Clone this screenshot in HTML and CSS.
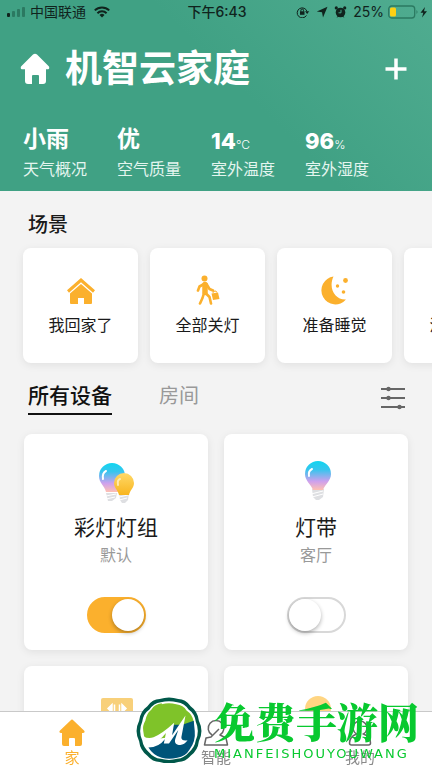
FILE: index.html
```html
<!DOCTYPE html>
<html lang="zh-CN">
<head>
<meta charset="utf-8">
<meta name="viewport" content="width=device-width, initial-scale=1">
<title>机智云家庭</title>
<link rel="stylesheet" href="styles.css">
</head>
<body>
<div class="app">
  <header class="hero">
    <div class="status">
      <div class="status-left">
        <svg width="20" height="12" viewBox="0 0 20 12" aria-hidden="true"><rect x="1" y="7" width="3" height="4" rx="1" fill="#10231d"/><g fill="#2b7961"><rect x="6" y="5" width="3" height="6" rx="1"/><rect x="11" y="3" width="3" height="8" rx="1"/><rect x="16" y="1" width="3" height="10" rx="1"/></g></svg>
        <span class="carrier">中国联通</span>
        <svg class="wifi" width="16" height="12" viewBox="0 0 16 12" aria-hidden="true"><g fill="none" stroke="#10231d" stroke-width="2"><path d="M.8 4.4a10.3 10.3 0 0 1 14.4 0"/><path d="M3.4 7.2a6.6 6.6 0 0 1 9.2 0"/></g><path d="M8 11.6 5.5 9a3.6 3.6 0 0 1 5 0z" fill="#10231d"/></svg>
      </div>
      <time class="clock">下午6:43</time>
      <div class="status-right">
        <svg width="14" height="12" viewBox="0 0 14 12" aria-hidden="true"><path d="M10.5 9.4A5 5 0 1 1 11 5.500" fill="none" stroke="#10231d"/><path d="M9 5.300h4.200L11.200 8z" fill="#10231d"/><rect x="4" y="5.300" width="4.500" height="3.500" fill="#10231d"/><path d="M4.900 5.500V4.300a1.300 1.300 0 0 1 2.600 0v1.200" fill="none" stroke="#10231d"/></svg>
        <svg width="12" height="12" viewBox="0 0 12 12" aria-hidden="true"><path d="M11.500.8 7 11.500 6 6.300.8 5.500z" fill="#10231d"/></svg>
        <svg width="13" height="12" viewBox="0 0 13 12" aria-hidden="true"><g fill="#10231d"><circle cx="6.500" cy="6.500" r="4.800"/><circle cx="2.300" cy="1.900" r="1.600"/><circle cx="10.700" cy="1.900" r="1.600"/><path d="m2.500 11.800 1.400-2h5.200l1.400 2-2-1h-4z"/></g><path d="M7 3.800v3H4.500" fill="none" stroke="#45a488"/></svg>
        <span class="percent">25%</span>
        <svg width="40" height="14" viewBox="0 0 40 14" aria-hidden="true"><rect x=".7" y="1" width="26" height="12" rx="3" fill="none" stroke="#2b7961" stroke-width="1.300"/><rect x="2" y="2.500" width="6" height="9" rx="1.500" fill="#fdd013"/><path d="M28.500 5v4q2-2 0-4z" fill="#2b7961"/><path d="m37 2-4.500 5.800h2.800L34 12.500l5-6.200h-3z" fill="#10231d"/></svg>
      </div>
    </div>
    <div class="title-row">
      <svg width="30" height="32" viewBox="0 0 30 32" aria-hidden="true"><path d="M13 1.600a3 3 0 0 1 4 0l11.500 11.500c1.500 1.500.6 3.200-1 3.200H26V28a3 3 0 0 1-3 3h-4v-8a1 1 0 0 0-1-1h-5a1 1 0 0 0-1 1v8H8a3 3 0 0 1-3-3V16.300H2.500c-1.600 0-2.500-1.700-1-3.200z" fill="#fff"/></svg>
      <h1>机智云家庭</h1>
      <button class="icon-button add" type="button" aria-label="添加"><svg width="24" height="24" viewBox="0 0 24 24"><path d="M12 1.500v21M1.500 12h21" stroke="#fff" stroke-width="3.500"/></svg></button>
    </div>
    <dl class="weather">
      <div><dd>小雨</dd><dt>天气概况</dt></div>
      <div><dd>优</dd><dt>空气质量</dt></div>
      <div><dd class="number">14<small>°C</small></dd><dt>室外温度</dt></div>
      <div><dd class="number">96<small>%</small></dd><dt>室外湿度</dt></div>
    </dl>
  </header>

  <main>
    <h2>场景</h2>
    <div class="scenes">
      <button class="scene" type="button">
        <svg width="30" height="30" viewBox="0 0 30 30" aria-hidden="true"><g fill="#fbb02d"><path d="M1 15.300 15 3l14 12.300-2 2.400L15 7.200 3 17.700z"/><path d="M4 18.400 15 9l11 9.400V28a1 1 0 0 1-1 1h-7v-6h-6v6H5a1 1 0 0 1-1-1z"/></g></svg>
        <span>我回家了</span>
      </button>
      <button class="scene" type="button">
        <svg width="30" height="30" viewBox="0 0 30 30" aria-hidden="true"><circle cx="11.500" cy="3.500" r="3" fill="#fbb02d"/><g fill="none" stroke="#fbb02d" stroke-linecap="round" stroke-linejoin="round"><path d="M12 9.500v8" stroke-width="5.500"/><path d="m11 9-4.500 2.500L5 15.500M13.500 9l3 5 3.500 1.500M11 18l-1.500 5L7 28.500M12.500 18l4 4 1.500 6.500" stroke-width="2.600"/></g><path d="m18.500 18.500 6.500-1 1.500 6.500-6.500 1z" fill="#fbb02d"/><path d="m20 18 .3-1.500 2.700-.5.800 1.500" fill="none" stroke="#fbb02d"/></svg>
        <span>全部关灯</span>
      </button>
      <button class="scene" type="button">
        <svg width="30" height="30" viewBox="0 0 30 30" aria-hidden="true"><g fill="#fbb02d"><path d="M13.500 1.500a14 14 0 1 0 12.500 23C15 25 8 13 13.500 1.500z"/><circle cx="25.500" cy="5.500" r="2.400"/><circle cx="17.500" cy="11" r="1.700"/><circle cx="23.500" cy="17" r="1.800"/></g></svg>
        <span>准备睡觉</span>
      </button>
      <button class="scene" type="button">
        <svg width="30" height="30" viewBox="0 0 30 30" aria-hidden="true"><path d="M15 2c5 7 9 11 9 17a9 9 0 0 1-18 0c0-6 4-10 9-17z" fill="#fbb02d"/></svg>
        <span>浪漫时光</span>
      </button>
    </div>

    <div class="filters">
      <button class="filter active" type="button">所有设备</button>
      <button class="filter" type="button">房间</button>
      <button class="icon-button settings" type="button" aria-label="设备管理"><svg width="24" height="24" viewBox="0 0 24 24"><path d="M0 3h24M0 12h24M0 21h24" stroke="#666" stroke-width="2"/><g fill="#666"><circle cx="7.500" cy="3" r="2.200"/><circle cx="7.500" cy="12" r="2.200"/><circle cx="18.500" cy="21" r="2.200"/></g></svg></button>
    </div>

    <div class="devices">
      <article class="device">
        <svg width="48" height="48" viewBox="0 0 48 48" aria-hidden="true">
          <defs>
            <linearGradient id="cool" x1="0" y1="0" x2="0" y2="1"><stop offset="0" stop-color="#10d5ef"/><stop offset=".3" stop-color="#37c5ee"/><stop offset=".7" stop-color="#cda0ee"/><stop offset="1" stop-color="#ffc0b2"/></linearGradient>
            <linearGradient id="warm" x1="0" y1="0" x2="0" y2="1"><stop offset="0" stop-color="#ffd968"/><stop offset="1" stop-color="#f8b51f"/></linearGradient>
          </defs>
          <path d="M14 34h11l-1 5-4 3h-4z" fill="#dedfe2"/><path d="m14 37 10-2m-10 5 9-2" stroke="#fff"/>
          <path d="M20 4a13 13 0 0 0-13 13c0 7 5 9 7 16h12c2-7 7-9 7-16A13 13 0 0 0 20 4z" fill="url(#cool)"/>
          <path d="M11 20q-1-6 3-8" fill="none" stroke="#fff" stroke-width="2" stroke-linecap="round"/>
          <path d="M27 34h10l-1 7-3 3h-3l-2-3z" fill="#dedfe2"/><path d="m27 38 9-2m-9 5 8-2" stroke="#fff"/>
          <path d="M32 14a10 10 0 0 0-10 10c0 5 4 7 5 12h10c1-5 5-7 5-12a10 10 0 0 0-10-10z" fill="url(#warm)"/>
          <path d="M26 26q-1-5 2-6" fill="none" stroke="#ffebb0" stroke-width="2" stroke-linecap="round"/>
        </svg>
        <h3>彩灯灯组</h3>
        <p>默认</p>
        <input class="switch" type="checkbox" role="switch" aria-label="彩灯灯组" checked>
      </article>
      <article class="device">
        <svg width="48" height="48" viewBox="0 0 48 48" aria-hidden="true">
          <path d="M20 30h12l-1 8-4 3h-3l-3-3z" fill="#dedfe2"/><path d="m19 35 12-3m-11 6 11-3" stroke="#fff"/>
          <path d="M26 2a13 13 0 0 0-13 13c0 7 6 10 8 16h10c2-6 8-9 8-16A13 13 0 0 0 26 2z" fill="url(#cool)"/>
          <path d="M17 17q-1-5 3-7" fill="none" stroke="#fff" stroke-width="2" stroke-linecap="round"/>
        </svg>
        <h3>灯带</h3>
        <p>客厅</p>
        <input class="switch" type="checkbox" role="switch" aria-label="灯带">
      </article>
      <article class="device">
        <svg width="48" height="48" viewBox="0 0 48 48" aria-hidden="true"><rect x="9" y="7" width="32" height="32" rx="2" fill="#f8d07a"/><path d="m20 13.500-4 4 4 4zM30 13.500l4 4-4 4zM22.500 13.500v8M27.500 13.500v8" fill="#fff" stroke="#fff" stroke-width="1.500"/></svg>
      </article>
      <article class="device">
        <svg width="48" height="48" viewBox="0 0 48 48" aria-hidden="true"><circle cx="26" cy="18" r="13" fill="#ffd582"/></svg>
      </article>
    </div>
  </main>

  <nav class="tabs">
    <a class="tab current" href="#home"><svg width="26" height="28" viewBox="0 0 26 28" aria-hidden="true"><path d="M11.500 1.400a2 2 0 0 1 3 0L25 11.600c1.200 1.200.5 2.400-.8 2.400H23v11a2 2 0 0 1-2 2h-5v-7a1 1 0 0 0-1-1h-4a1 1 0 0 0-1 1v7H5a2 2 0 0 1-2-2V14H1.800C.5 14-.2 12.800 1 11.600z" fill="#fbb02d"/></svg><span>家</span></a>
    <a class="tab" href="#smart"><svg width="26" height="28" viewBox="0 0 26 28" aria-hidden="true"><path d="M9 16a7.800 7.800 0 1 1 8 0l6 3 1.500 7h-23L3 19l5-1 8-8" fill="none" stroke="#666" stroke-width="1.500" stroke-linejoin="round"/></svg><span>智能</span></a>
    <a class="tab" href="#mine"><svg width="26" height="28" viewBox="0 0 26 28" aria-hidden="true"><path d="M9.500 15a7 7 0 1 1 7 0c5 2 7 5 7 9a2 2 0 0 1-2 2h-17a2 2 0 0 1-2-2c0-4 2-7 7-9z" fill="none" stroke="#666" stroke-width="1.500"/></svg><span>我的</span></a>
  </nav>

  <div class="brand">
    <svg width="68" height="66" viewBox="1 0 66 64" aria-hidden="true">
      <path d="M25 2Q34-1 43 2q7 0 12 7 7 5 8 14 5 10 0 20-1 9-8 14-5 6-12 6-9 3-18 0-7 0-12-6-7-5-8-14-5-10 0-20 1-9 8-14 5-7 12-7z" fill="#00584a"/>
      <path d="M26 5q8-2 16 0 7 1 11 7 6 4 7 12 4 9 0 18-1 7-7 12-4 5-11 6-8 2-16 0-7-1-11-6-6-5-7-12-4-9 0-18 1-8 7-12 4-6 11-7z" fill="#fff"/>
      <path d="M27 7q7-2 14 0 7 1 10 6 6 4 7 11v4L42 38 12 42q-3-4-3-9-1-5 2-10 1-7 6-11 3-5 10-6z" fill="#7fc329"/>
      <path d="m58 23 1 10q1 10-5 18-4 7-12 8-8 2-15 0-8-2-13-10 10 0 16-8l9-14 8 0z" fill="#005479"/>
      <path d="M9 38q5 3 10 1 8-3 20-14l-2 12 13-19-4 21q0 4 6 3-4 6-10 4-3-1-2-5l3-9-9 13h-5l2-10q-7 9-14 11-8 2-8-7z" fill="#fff"/>
    </svg>
    <div class="brand-text"><strong>免费手游网</strong><span>MIANFEISHOUYOUWANG</span></div>
  </div>
</div>
</body>
</html>
```
FILE: styles.css
```css
* {
  box-sizing: border-box;
}

body {
  margin: 0;
  background: #f3f3f3;
  color: #1a1a1a;
  font-family: Inter, "Noto Sans CJK SC", sans-serif;
}

h1, h2, h3, p, dl, dd {
  margin: 0;
}

button {
  border: 0;
  padding: 0;
  background: none;
  color: inherit;
  font: inherit;
}

svg {
  display: block;
  flex: none;
}

.app {
  height: 100vh;
  overflow: hidden;
}

.hero {
  padding-bottom: 8px;
  background: linear-gradient(225deg, #50ac90 0%, #40a184 45%, #40a184 100%);
  color: #fff;
}

.status {
  display: grid;
  grid-template-columns: 1fr auto 1fr;
  align-items: center;
  height: 24px;
  padding: 0 4px 0 6px;
  color: #10231d;
  font-size: 14px;
  line-height: 20px;
}

.status-left,
.status-right {
  display: flex;
  align-items: center;
  gap: 4px;
}

.wifi {
  margin-left: 4px;
}

.clock {
  font-weight: 500;
}

.status-right {
  justify-content: flex-end;
  gap: 6px;
}

.percent {
  margin-right: -2px;
}

.title-row {
  display: flex;
  align-items: center;
  height: 90px;
  padding: 0 24px 0 20px;
}

h1 {
  margin-left: 15px;
  font-size: 37px;
  font-weight: 700;
  line-height: 48px;
}

.weather {
  display: flex;
  gap: 30px;
  padding: 8px 23px 0;
}

.weather > div {
  display: flex;
  flex-direction: column;
}

.weather dd {
  height: 35px;
  font-size: 23px;
  font-weight: 700;
  line-height: 34px;
}

.weather .number {
  padding-top: 2px;
  font-size: 22px;
  font-weight: 800;
}

.weather small {
  font-size: 12px;
  font-weight: 300;
  line-height: 12px;
}

.weather dt {
  padding-bottom: 2px;
  color: #e4f5ef;
  font-size: 16px;
  line-height: 24px;
}

h2 {
  padding: 20px 28px 9px;
  font-size: 20px;
  font-weight: 500;
  line-height: 28px;
}

.scenes {
  display: flex;
  gap: 12px;
  padding: 0 23px;
}

.scene {
  display: flex;
  flex: none;
  flex-direction: column;
  align-items: center;
  gap: 7px;
  width: 115px;
  padding: 27px 0 25px;
  border-radius: 8px;
  background: #fff;
  box-shadow: 0 2px 8px rgba(0, 0, 0, 0.08);
  font-size: 16px;
  line-height: 26px;
}

.filters {
  display: flex;
  align-items: center;
  margin-top: 17px;
  padding: 0 27px 0 28px;
}

.filter {
  padding-bottom: 1px;
  border-bottom: 2px solid transparent;
  color: #999;
  font-size: 20px;
  line-height: 32px;
}

.filter + .filter {
  margin-left: 47px;
}

.filter.active {
  border-color: #111;
  color: #111;
  font-size: 21px;
  font-weight: 500;
}

.icon-button {
  margin-left: auto;
}

.devices {
  display: grid;
  grid-template-columns: 1fr 1fr;
  gap: 16px;
  padding: 19px 24px;
}

.device {
  display: flex;
  flex-direction: column;
  align-items: center;
  height: 216px;
  padding-top: 25px;
  border-radius: 8px;
  background: #fff;
  box-shadow: 0 2px 8px rgba(0, 0, 0, 0.08);
}

h3 {
  margin-top: 6px;
  font-size: 21px;
  font-weight: 400;
  line-height: 30px;
}

.device p {
  color: #999;
  font-size: 16px;
  line-height: 24px;
}

.switch {
  appearance: none;
  display: flex;
  width: 59px;
  height: 36px;
  margin: 30px 0 0;
  padding: 0;
  border: 2px solid #d8d8d8;
  border-radius: 18px;
  background: #fff;
}

.switch::before {
  content: "";
  width: 32px;
  height: 32px;
  border-radius: 50%;
  background: #fff;
  box-shadow: 0 2px 4px rgba(0, 0, 0, 0.3);
}

.switch:checked {
  justify-content: flex-end;
  border-color: #fbb02d;
  background: #fbb02d;
}

.tabs {
  position: fixed;
  right: 0;
  bottom: 0;
  left: 0;
  display: flex;
  height: 57px;
  border-top: 1px solid #c9c9c9;
  background: #fff;
}

.tab {
  display: flex;
  flex: 1;
  flex-direction: column;
  align-items: center;
  padding-top: 7px;
  color: #8a8a8a;
  font-size: 15px;
  line-height: 22px;
  text-decoration: none;
}

.tab.current {
  color: #fbb02d;
}

.brand {
  position: fixed;
  right: 13px;
  bottom: 5px;
  display: flex;
  align-items: flex-start;
  gap: 11px;
  pointer-events: none;
}

.brand-text {
  display: flex;
  flex-direction: column;
  color: #08c92f;
}

.brand strong {
  font-family: "Noto Serif CJK SC", "Noto Sans CJK SC", serif;
  font-size: 41px;
  font-weight: 900;
  line-height: 48px;
}

.brand span {
  font-family: "DejaVu Sans", sans-serif;
  font-size: 13px;
  letter-spacing: 2px;
  line-height: 18px;
}
```
